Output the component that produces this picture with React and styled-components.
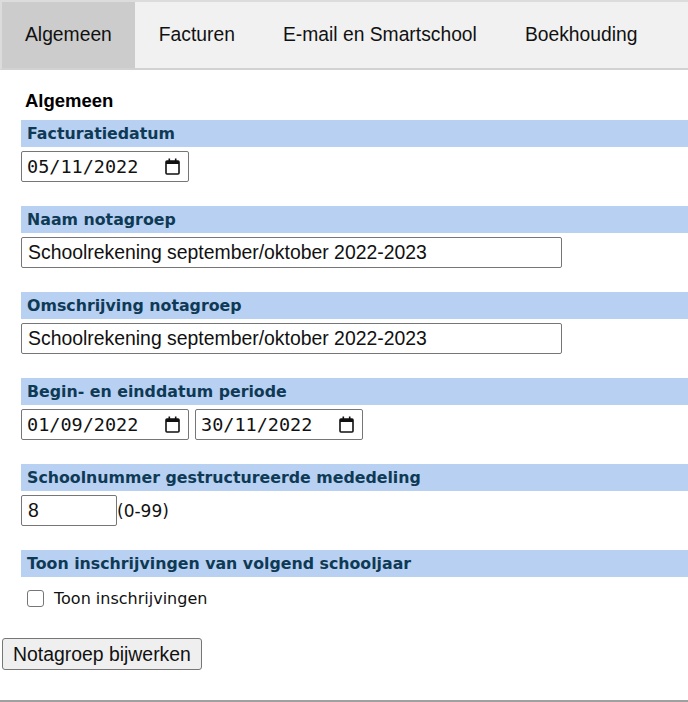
import React from 'react'
import styled, { createGlobalStyle } from 'styled-components'

const GlobalStyle = createGlobalStyle`
  body {
    margin: 0;
    background: #fff;
    font-family: "Liberation Sans", Arial, sans-serif;
    color: #000;
  }
`

const tabs = ['Algemeen', 'Facturen', 'E-mail en Smartschool', 'Boekhouding']

const Page = styled.div`
  width: 688px;
  height: 702px;
  box-sizing: border-box;
  border-bottom: 2px solid #a0a0a0;
  display: flex;
  flex-direction: column;
`

const TabBar = styled.nav`
  display: flex;
  height: 66px;
  background: #f1f1f1;
  border-top: 2px solid #dcdcdc;
  border-left: 2px solid #dcdcdc;
  border-bottom: 2px solid #d2d2d2;
`

const Tab = styled.div`
  display: flex;
  align-items: center;
  padding: 0 ${p => (p.$active ? 23 : 24)}px;
  font-size: 19.3px;
  color: #111;
  background: ${p => (p.$active ? '#cccccc' : 'transparent')};
`

const Content = styled.div`
  padding: 20px 0 0 21px;
`

const Title = styled.h3`
  margin: 0 0 8px 4px;
  font-size: 18.5px;
  font-weight: bold;
  line-height: 22px;
`

const Section = styled.section`
  margin-bottom: 24px;
`

const SectionHeader = styled.div`
  height: 27px;
  display: flex;
  align-items: center;
  padding-left: 6px;
  background: #b8d1f3;
  color: #0f3a55;
  font-family: "DejaVu Sans", Verdana, sans-serif;
  font-weight: bold;
  font-size: 15.8px;
  margin-bottom: 4px;
`

const Row = styled.div`
  display: flex;
  align-items: center;
  gap: 6px;
`

const DateBox = styled.div`
  width: 168px;
  height: 31px;
  box-sizing: border-box;
  border: 1px solid #767676;
  border-radius: 2px;
  display: flex;
  align-items: center;
  justify-content: space-between;
  padding: 0 8px 0 5px;
  font-family: "DejaVu Sans Mono", "Liberation Mono", monospace;
  font-size: 18.5px;
  color: #111;
`

const TextBox = styled.input`
  width: ${p => p.$width}px;
  height: 31px;
  box-sizing: border-box;
  border: 1px solid #767676;
  border-radius: 2px;
  padding: 0 6px;
  font-family: "Liberation Sans", Arial, sans-serif;
  font-size: 19.4px;
  color: #111;
  margin: 0;
  outline: none;
`

const Hint = styled.span`
  font-family: "DejaVu Sans", Verdana, sans-serif;
  font-size: 17px;
  color: #111;
  margin-left: -6px;
`

const CheckRow = styled.label`
  display: flex;
  align-items: center;
  gap: 10px;
  padding: 8px 0 0 6px;
  font-family: "DejaVu Sans", Verdana, sans-serif;
  font-size: 16px;
  color: #111;
`

const Check = styled.span`
  width: 17px;
  height: 17px;
  box-sizing: border-box;
  border: 1.5px solid #767676;
  border-radius: 3px;
  background: #fff;
`

const Button = styled.button`
  margin: 30px 0 0 2px;
  align-self: flex-start;
  height: 32px;
  padding: 0 10px;
  background: #efefef;
  border: 1px solid #767676;
  border-radius: 3px;
  font-family: "Liberation Sans", Arial, sans-serif;
  font-size: 19.4px;
  color: #111;
`

const CalendarIcon = () => (
  <svg width="15" height="17" viewBox="0 0 15 17">
    <rect x="1" y="3" width="13" height="13" rx="1" fill="none" stroke="#111" strokeWidth="1.6" />
    <rect x="1" y="3" width="13" height="3" fill="#111" />
    <rect x="3.5" y="0.5" width="1.6" height="3" fill="#111" />
    <rect x="9.9" y="0.5" width="1.6" height="3" fill="#111" />
  </svg>
)

const DateField = ({ value }) => (
  <DateBox>
    <span>{value}</span>
    <CalendarIcon />
  </DateBox>
)

export default function App() {
  return (
    <>
      <GlobalStyle />
      <Page>
        <TabBar>
          {tabs.map((t, i) => (
            <Tab key={t} $active={i === 0}>{t}</Tab>
          ))}
        </TabBar>
        <Content>
          <Title>Algemeen</Title>
          <Section>
            <SectionHeader>Facturatiedatum</SectionHeader>
            <DateField value="05/11/2022" />
          </Section>
          <Section>
            <SectionHeader>Naam notagroep</SectionHeader>
            <TextBox $width={541} readOnly value="Schoolrekening september/oktober 2022-2023" />
          </Section>
          <Section>
            <SectionHeader>Omschrijving notagroep</SectionHeader>
            <TextBox $width={541} readOnly value="Schoolrekening september/oktober 2022-2023" />
          </Section>
          <Section>
            <SectionHeader>Begin- en einddatum periode</SectionHeader>
            <Row>
              <DateField value="01/09/2022" />
              <DateField value="30/11/2022" />
            </Row>
          </Section>
          <Section>
            <SectionHeader>Schoolnummer gestructureerde mededeling</SectionHeader>
            <Row>
              <TextBox $width={96} readOnly value="8" />
              <Hint>(0-99)</Hint>
            </Row>
          </Section>
          <div>
            <SectionHeader>Toon inschrijvingen van volgend schooljaar</SectionHeader>
            <CheckRow>
              <Check />
              Toon inschrijvingen
            </CheckRow>
          </div>
        </Content>
        <Button>Notagroep bijwerken</Button>
      </Page>
    </>
  )
}
